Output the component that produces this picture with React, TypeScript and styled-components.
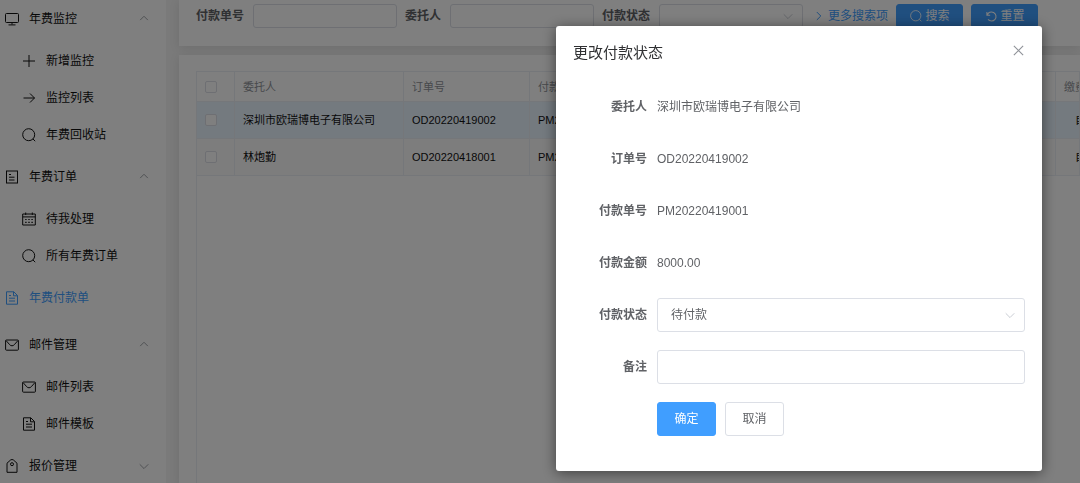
import React from "react";
import styled, { createGlobalStyle, css } from "styled-components";

const GlobalStyle = createGlobalStyle`
  *, *::before, *::after { box-sizing: border-box; }
  body {
    margin: 0;
    overflow: hidden;
    background: #f4f4f4;
    color: #303133;
    font: 12px/16px "Liberation Sans", "Noto Sans CJK SC", sans-serif;
  }
  button, input, select { font: inherit; color: inherit; }
`;

const Page = styled.div`
  display: flex;
  height: 100vh;
  overflow: hidden;
`;

const Sidebar = styled.nav`
  flex: 0 0 166px;
  background: #fff;
  overflow: hidden;
`;

const Menu = styled.div`
  display: flex;
  flex-direction: column;
  margin-top: -5px;
`;

const entry = css`
  display: flex;
  align-items: center;
  flex: none;
  border: 0;
  background: none;
  text-align: left;
  text-decoration: none;
  cursor: pointer;
`;

const GroupButton = styled.button`
  ${entry}
  height: 47px;
  padding: 0 16px 0 5px;
  gap: 10px;
  color: #111;
`;

const TopLink = styled.a`
  ${entry}
  height: 47px;
  padding: 0 16px 0 5px;
  gap: 10px;
  color: #409eff;
`;

const SubLink = styled.a`
  ${entry}
  height: 37px;
  padding: 0 16px 0 22px;
  gap: 10px;
  color: #111;
`;

const Caption = styled.span`
  flex: 1;
  white-space: nowrap;
`;

const Glyph = styled.svg<{ $size?: number; $color?: string }>`
  flex: none;
  display: block;
  width: ${(p) => p.$size ?? 14}px;
  height: ${(p) => p.$size ?? 14}px;
  color: ${(p) => p.$color ?? "inherit"};
  fill: none;
  stroke: currentColor;
  stroke-width: 1;
`;

const Main = styled.main`
  flex: 1;
  min-width: 0;
  display: flex;
  flex-direction: column;
  gap: 9px;
  padding-left: 13px;
`;

const Card = styled.section<{ $grow?: boolean }>`
  flex: ${(p) => (p.$grow ? "1" : "none")};
  min-height: 0;
  display: flex;
  background: #fff;
  box-shadow: 0 2px 10px rgba(0, 0, 0, 0.1);
  padding: ${(p) => (p.$grow ? "16px 0 0 17px" : "4px 17px 18px")};
`;

const SearchForm = styled.form`
  display: flex;
  align-items: center;
  gap: 8px;
`;

const SearchItem = styled.div`
  display: flex;
  align-items: center;
  gap: 9px;
  white-space: nowrap;
`;

const Label = styled.label`
  font-weight: 700;
  color: #606266;
  white-space: nowrap;
`;

const box = css`
  width: 100%;
  min-width: 0;
  border: 1px solid #dcdfe6;
  border-radius: 3px;
  background: #fff;
  color: #606266;
  outline: none;
`;

const Input = styled.input<{ $small?: boolean }>`
  ${box}
  height: ${(p) => (p.$small ? 24 : 34)}px;
  width: ${(p) => (p.$small ? "144px" : "100%")};
  padding: 0 12px;
`;

const SelectBox = styled.div<{ $small?: boolean }>`
  display: grid;
  align-items: center;
  width: ${(p) => (p.$small ? "144px" : "100%")};
  > * { grid-area: 1 / 1; }
  > svg { justify-self: end; margin-right: 9px; pointer-events: none; }
  > select {
    ${box}
    appearance: none;
    height: ${(p) => (p.$small ? 24 : 34)}px;
    padding: 0 28px 0 13px;
  }
`;

const MoreLink = styled.a`
  display: flex;
  align-items: center;
  gap: 4px;
  margin-left: 3px;
  color: #409eff;
  text-decoration: none;
  white-space: nowrap;
`;

const Button = styled.button<{ $primary?: boolean; $small?: boolean }>`
  display: flex;
  align-items: center;
  justify-content: center;
  gap: 4px;
  flex: none;
  width: ${(p) => (p.$small ? 67 : 59)}px;
  height: ${(p) => (p.$small ? 24 : 34)}px;
  padding: 0;
  border: 1px solid ${(p) => (p.$primary ? "#409eff" : "#dcdfe6")};
  border-radius: 3px;
  background: ${(p) => (p.$primary ? "#409eff" : "#fff")};
  color: ${(p) => (p.$primary ? "#fff" : "#606266")};
  white-space: nowrap;
  cursor: pointer;
`;

const TableFrame = styled.div`
  flex: 1;
  min-width: 0;
  overflow: hidden;
  border: solid #ebeef5;
  border-width: 1px 0 0 1px;
`;

const Table = styled.table`
  width: 100%;
  min-width: 860px;
  table-layout: fixed;
  border-collapse: separate;
  border-spacing: 0;
  font-size: 11px;
  color: #111;
`;

const Cell = styled.td<{ $inset?: boolean }>`
  height: 37px;
  padding: 0 0 0 ${(p) => (p.$inset ? 19 : 8)}px;
  border: solid #ebeef5;
  border-width: 0 1px 1px 0;
  white-space: nowrap;
  overflow: hidden;
`;

const HeadCell = styled(Cell)`
  height: 30px;
  font-weight: 400;
  text-align: left;
  color: #909399;
`;

const Row = styled.tr<{ $hover?: boolean }>`
  background: ${(p) => (p.$hover ? "#e8f4ff" : "#fafafa")};
`;

const Check = styled.input`
  appearance: none;
  display: block;
  width: 12px;
  height: 12px;
  margin: 0;
  border: 1px solid #dcdfe6;
  border-radius: 2px;
  background: #fff;
`;

const Overlay = styled.div`
  position: fixed;
  inset: 0;
  display: flex;
  align-items: flex-start;
  justify-content: flex-end;
  padding: 26px 38px 0;
  background: rgba(0, 0, 0, 0.5);
`;

const Dialog = styled.div`
  width: 45vw;
  min-width: 360px;
  background: #fff;
  border-radius: 3px;
  box-shadow: 0 2px 14px rgba(0, 0, 0, 0.5);
`;

const DialogHead = styled.header`
  display: flex;
  align-items: flex-start;
  justify-content: space-between;
  padding: 17px 17px 8px;
`;

const DialogTitle = styled.h2`
  margin: 0;
  font-size: 15px;
  line-height: 20px;
  font-weight: 400;
`;

const Close = styled.button`
  display: flex;
  padding: 1px 0;
  border: 0;
  background: none;
  color: #909399;
  cursor: pointer;
`;

const DialogForm = styled.form`
  display: flex;
  flex-direction: column;
  gap: 18px;
  padding: 19px 17px 35px;
`;

const FormRow = styled.div`
  display: grid;
  grid-template-columns: 74px 1fr;
  column-gap: 10px;
  align-items: center;
  min-height: 34px;
  color: #606266;
  > ${Label} { text-align: right; }
`;

const Actions = styled.div`
  grid-column: 2;
  display: flex;
  gap: 9px;
`;

type IconName =
  | "monitor" | "plus" | "arrow" | "search" | "order" | "calendar"
  | "document" | "mail" | "tag" | "up" | "down" | "right" | "reset" | "close";

const shapes: Record<IconName, React.ReactNode> = {
  monitor: <><rect x="0.5" y="1.5" width="13" height="9" rx="1" /><path d="M7 10.5v2M3.5 12.9h7" /></>,
  plus: <path d="M7 1v12M1 7h12" />,
  arrow: <path d="M1.5 7h11M8 2.5 12.500 7 8 11.500" />,
  search: <><circle cx="6.700" cy="6.700" r="6" /><path d="m10.900 10.900 2.300 2.300" /></>,
  order: <><rect x="1.500" y="1" width="11" height="12" /><path d="M4 4.500h2M4 7.200h5.500M4 10h5.500" /></>,
  calendar: <><path d="M0.700 2h12.600v11H0.700zM0.700 4.900h12.600M3.700 0.500v2.500M10.300 0.500v2.500" /><path d="M3.200 7.500h8M3.200 10.300h8" strokeDasharray="1.400 1.700" strokeWidth="1.200" /></>,
  document: <><path d="M1.500 0.800h7.300l3.700 3.700v8.700h-11zM8.500 0.800v4h4" /><path d="M4 4.500h2M4 7.200h6M4 10h6" /></>,
  mail: <><rect x="0.600" y="2" width="12.800" height="10.200" rx="0.800" /><path d="m1 2.500 3.700 4.200a3 3 0 0 0 4.600 0L13 2.500" /></>,
  tag: <><path d="M2 13.300V4.200L5.700.9q1.300-.8 2.600 0L12 4.200v9.100z" /><circle cx="7" cy="5.200" r="1.500" /></>,
  up: <path d="M2.500 8.300 7 3.800l4.500 4.500" />,
  down: <path d="M2 5 7 10l5-5" />,
  right: <path d="M4 1.500 9.500 7 4 12.500" strokeWidth="1.400" />,
  reset: <path d="M2.200 2.200v3.800h3.800M2.500 6A5.300 5.300 0 1 1 3.500 11M2.500 6 4.500 3" strokeWidth="1.200" />,
  close: <path d="m2 2 10 10M12 2 2 12" strokeWidth="1.200" />,
};

function Icon({ name, size, color }: { name: IconName; size?: number; color?: string }) {
  return (
    <Glyph viewBox="0 0 14 14" $size={size} $color={color} aria-hidden="true">
      {shapes[name]}
    </Glyph>
  );
}

function Group({ icon, label, open = true }: { icon: IconName; label: string; open?: boolean }) {
  return (
    <GroupButton type="button" aria-expanded={open}>
      <Icon name={icon} />
      <Caption>{label}</Caption>
      <Icon name={open ? "up" : "down"} size={12} color="#909399" />
    </GroupButton>
  );
}

function Sub({ icon, label }: { icon: IconName; label: string }) {
  return (
    <SubLink href="#">
      <Icon name={icon} />
      <Caption>{label}</Caption>
    </SubLink>
  );
}

const rows = [
  { client: "深圳市欧瑞博电子有限公司", order: "OD20220419002", payment: "PM20220419001" },
  { client: "林炮勤", order: "OD20220418001", payment: "PM20220418001" },
];

const details = [
  ["委托人", "深圳市欧瑞博电子有限公司"],
  ["订单号", "OD20220419002"],
  ["付款单号", "PM20220419001"],
  ["付款金额", "8000.00"],
];

export default function App() {
  return (
    <>
      <GlobalStyle />
      <Page>
        <Sidebar>
          <Menu>
            <Group icon="monitor" label="年费监控" />
            <Sub icon="plus" label="新增监控" />
            <Sub icon="arrow" label="监控列表" />
            <Sub icon="search" label="年费回收站" />
            <Group icon="order" label="年费订单" />
            <Sub icon="calendar" label="待我处理" />
            <Sub icon="search" label="所有年费订单" />
            <TopLink href="#" aria-current="page">
              <Icon name="document" />
              <Caption>年费付款单</Caption>
            </TopLink>
            <Group icon="mail" label="邮件管理" />
            <Sub icon="mail" label="邮件列表" />
            <Sub icon="document" label="邮件模板" />
            <Group icon="tag" label="报价管理" open={false} />
          </Menu>
        </Sidebar>
        <Main>
          <Card>
            <SearchForm>
              <SearchItem>
                <Label htmlFor="q-payment">付款单号</Label>
                <Input id="q-payment" $small />
              </SearchItem>
              <SearchItem>
                <Label htmlFor="q-client">委托人</Label>
                <Input id="q-client" $small />
              </SearchItem>
              <SearchItem>
                <Label htmlFor="q-status">付款状态</Label>
                <SelectBox $small>
                  <select id="q-status" defaultValue=""><option value="" /></select>
                  <Icon name="down" size={12} color="#c0c4cc" />
                </SelectBox>
              </SearchItem>
              <MoreLink href="#">
                <Icon name="right" size={10} />
                更多搜索项
              </MoreLink>
              <Button type="button" $primary $small><Icon name="search" size={12} />搜索</Button>
              <Button type="button" $primary $small><Icon name="reset" size={12} />重置</Button>
            </SearchForm>
          </Card>
          <Card $grow>
            <TableFrame>
              <Table>
                <colgroup>
                  <col style={{ width: 38 }} />
                  <col style={{ width: 169 }} />
                  <col style={{ width: 126 }} />
                  <col style={{ width: 526 }} />
                  <col />
                </colgroup>
                <thead>
                  <tr>
                    <HeadCell as="th"><Check type="checkbox" aria-label="全选" /></HeadCell>
                    <HeadCell as="th">委托人</HeadCell>
                    <HeadCell as="th">订单号</HeadCell>
                    <HeadCell as="th">付款单号</HeadCell>
                    <HeadCell as="th">缴费方式</HeadCell>
                  </tr>
                </thead>
                <tbody>
                  {rows.map((r, i) => (
                    <Row key={r.order} $hover={i === 0}>
                      <Cell><Check type="checkbox" aria-label={r.client} /></Cell>
                      <Cell>{r.client}</Cell>
                      <Cell>{r.order}</Cell>
                      <Cell>{r.payment}</Cell>
                      <Cell $inset>自行缴费</Cell>
                    </Row>
                  ))}
                </tbody>
              </Table>
            </TableFrame>
          </Card>
        </Main>
      </Page>
      <Overlay>
        <Dialog role="dialog" aria-modal="true" aria-labelledby="dialog-title">
          <DialogHead>
            <DialogTitle id="dialog-title">更改付款状态</DialogTitle>
            <Close type="button" aria-label="关闭"><Icon name="close" size={13} /></Close>
          </DialogHead>
          <DialogForm>
            {details.map(([name, value]) => (
              <FormRow key={name}>
                <Label as="span">{name}</Label>
                <span>{value}</span>
              </FormRow>
            ))}
            <FormRow>
              <Label htmlFor="status">付款状态</Label>
              <SelectBox>
                <select id="status"><option>待付款</option></select>
                <Icon name="down" size={12} color="#c0c4cc" />
              </SelectBox>
            </FormRow>
            <FormRow>
              <Label htmlFor="remark">备注</Label>
              <Input id="remark" />
            </FormRow>
            <FormRow>
              <Actions>
                <Button type="button" $primary>确定</Button>
                <Button type="button">取消</Button>
              </Actions>
            </FormRow>
          </DialogForm>
        </Dialog>
      </Overlay>
    </>
  );
}
